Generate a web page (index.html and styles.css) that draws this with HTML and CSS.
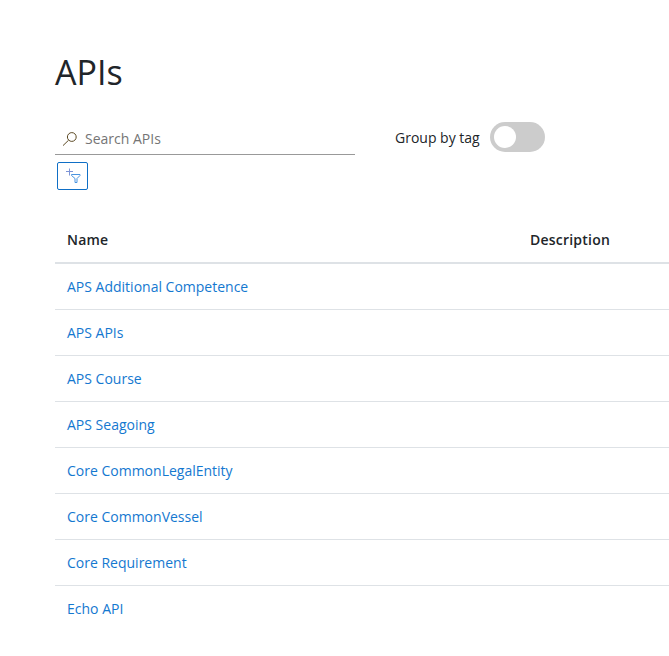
FILE: index.html
```html
<!DOCTYPE html>
<html lang="en">
<head>
<meta charset="utf-8">
<title>APIs</title>
<link rel="stylesheet" href="styles.css">
</head>
<body>
<main class="page">
  <h1>APIs</h1>
  <div class="toolbar">
    <div class="filters">
      <label class="search">
        <svg class="search-icon" width="16" height="16" viewBox="0 0 16 16"><circle cx="9.8" cy="6" r="4.4"/><path d="M6.6 9.2 1 14.6"/></svg>
        <input type="text" placeholder="Search APIs">
      </label>
      <button class="filter-btn" aria-label="Add filter">
        <svg width="16" height="16" viewBox="0 0 16 16"><path class="plus" d="M4.5 0.5v7M1 3.5h7"/><path d="M6.5 6.5h8.5v1l-3 3v4h-2v-4l-3.500-3z"/></svg>
      </button>
    </div>
    <div class="group">
      <span>Group by tag</span>
      <span class="switch"></span>
    </div>
  </div>
  <table>
    <thead><tr><th class="name">Name</th><th>Description</th></tr></thead>
    <tbody>
      <tr><td><a href="#">APS Additional Competence</a></td><td></td></tr>
      <tr><td><a href="#">APS APIs</a></td><td></td></tr>
      <tr><td><a href="#">APS Course</a></td><td></td></tr>
      <tr><td><a href="#">APS Seagoing</a></td><td></td></tr>
      <tr><td><a href="#">Core CommonLegalEntity</a></td><td></td></tr>
      <tr><td><a href="#">Core CommonVessel</a></td><td></td></tr>
      <tr><td><a href="#">Core Requirement</a></td><td></td></tr>
      <tr><td><a href="#">Echo API</a></td><td></td></tr>
    </tbody>
  </table>
</main>
</body>
</html>
```

FILE: styles.css
```css
* { box-sizing: border-box; }
body { margin: 0; height: 656px; overflow: hidden; background: #fff; color: #212529; font: 14px/21px "Open Sans", sans-serif; }
.page { padding: 51px 0 0 55px; }
h1 { margin: 0; font-size: 34px; line-height: 43px; font-weight: 400; }
.toolbar { display: flex; margin-top: 28px; height: 95px; }
.filters { width: 300px; }
.search { display: flex; align-items: center; height: 33px; padding: 1px 0 0 7px; border-bottom: 1px solid #999; }
.search-icon { fill: none; stroke: #5c4a24; stroke-width: 1; }
.search input { flex: 1; min-width: 0; margin: 0; padding: 0 0 0 7px; border: 0; outline: 0; font: inherit; background: none; }
.search input::placeholder { color: #757575; opacity: 1; }
.filter-btn { display: flex; align-items: center; justify-content: center; width: 31px; height: 28px; margin: 7px 0 0 2px; padding: 0; border: 1px solid #0f6fc6; border-radius: 2px; background: #fff; }
.filter-btn svg { fill: none; stroke: #4a94e0; stroke-width: 1; }
.filter-btn .plus { stroke: #7d94d6; }
.group { display: flex; align-items: center; gap: 10px; height: 30px; margin-left: 40px; }
.switch { width: 55px; height: 30px; padding: 4px; border-radius: 15px; background: #ccc; }
.switch::before { content: ""; display: block; width: 22px; height: 22px; border-radius: 50%; background: #fff; }
table { width: 100%; border-collapse: separate; border-spacing: 0; table-layout: fixed; }
th, td { height: 46px; padding: 0 12px; text-align: left; border-bottom: 1px solid #dee2e6; }
th { height: 47px; border-bottom: 2px solid #dee2e6; font-weight: 600; letter-spacing: 0.22px; }
.name { width: 463px; }
tr:last-child td { border-bottom: 0; }
thead tr:last-child th { border-bottom: 2px solid #dee2e6; }
tbody tr:last-child td { height: 45px; }
a { color: #1478d0; text-decoration: none; }
```
